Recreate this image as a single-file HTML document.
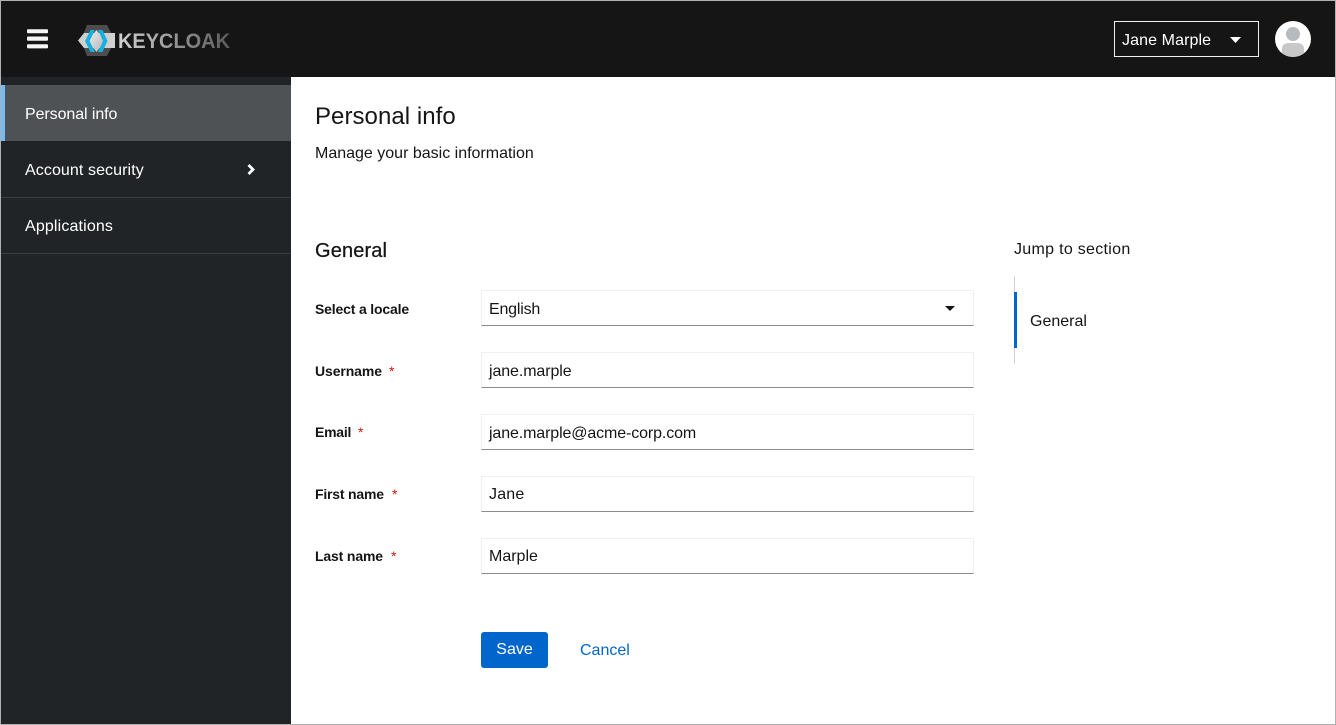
<!DOCTYPE html>
<html lang="en">
<head>
<meta charset="utf-8">
<title>Personal info</title>
<style>
html,body{margin:0;padding:0;background:#fff}
body{width:1336px;height:725px;position:relative;overflow:hidden;font-family:"Liberation Sans",sans-serif;font-size:16px;color:#151515}
.a{position:absolute;white-space:nowrap}
.t{line-height:24px}
.frame{position:absolute;left:0;top:0;width:1334px;height:723px;border:1px solid #b0b0b0;z-index:10;pointer-events:none}
.hdr{position:absolute;left:0;top:0;width:1336px;height:77px;background:#151515}
.side{position:absolute;left:0;top:77px;width:291px;height:648px;background:#212427}
.line{position:absolute;left:1px;width:290px;height:1px;background:#3c3f42}
.lab{position:absolute;left:315px;font-size:14px;line-height:20px;font-weight:700;white-space:nowrap}
.req{position:absolute;font-size:14px;line-height:20px;color:#c9190b}
.inp{position:absolute;left:481px;width:491px;height:34px;border:1px solid #f0f0f0;border-bottom:1px solid #8a8d90;background:#fff}
.val{position:absolute;left:489px;line-height:24px;white-space:nowrap}
</style>
</head>
<body>
<div class="hdr"></div>
<div class="side"></div>

<!-- hamburger -->
<svg class="a" style="left:27px;top:28px" width="21" height="22" viewBox="0 0 21 22">
<rect x="0" y="1.300" width="21" height="4" rx="1" fill="#f5f5f5"/>
<rect x="0" y="8.500" width="21" height="4.200" rx="1" fill="#f5f5f5"/>
<rect x="0" y="16.200" width="21" height="4.200" rx="1" fill="#f5f5f5"/>
</svg>

<!-- logo -->
<svg class="a" style="left:76px;top:22px" width="160" height="36" viewBox="0 0 160 36">
<defs>
<linearGradient id="g" x1="0" y1="0" x2="1" y2="0"><stop offset="0" stop-color="#d2d2d2"/><stop offset="1" stop-color="#5a5a5a"/></linearGradient>
<linearGradient id="d" x1="0" y1="0" x2="1" y2="1"><stop offset="0" stop-color="#eeeeee"/><stop offset="1" stop-color="#b4b4b4"/></linearGradient>
</defs>
<path d="M11 3H31L39 18.500L31 34H11L5 18.500Z" fill="#4d4d4d"/>
<path d="M8 11H39V26H8L2 18.500Z" fill="#d0d0d0"/>
<path d="M20.500 8L29 19L20.500 30L12 19Z" fill="url(#d)"/>
<path d="M14.500 8H19L13.500 19L19 30H14.500L9 19Z" fill="#17b0e2"/>
<path d="M22 8H26.500L31.500 19L26.500 30H22L27 19Z" fill="#17b0e2"/>
<text x="42" y="26" font-family="Liberation Sans" font-weight="700" font-size="21" textLength="112" lengthAdjust="spacingAndGlyphs" fill="url(#g)">KEYCLOAK</text>
</svg>

<!-- user dropdown -->
<div class="a" style="left:1114px;top:21px;width:143px;height:34px;border:1px solid #f0f0f0"></div>
<div class="a t" style="left:1122px;top:29px;color:#fff;font-size:16px;letter-spacing:.1px">Jane Marple</div>
<svg class="a" style="left:1230px;top:37px" width="11" height="6"><path d="M0 0H11L5.500 6Z" fill="#fff"/></svg>

<!-- avatar -->
<svg class="a" style="left:1275px;top:21px" width="36" height="36" viewBox="0 0 36 36">
<defs><clipPath id="c"><circle cx="18" cy="18" r="18"/></clipPath></defs>
<circle cx="18" cy="18" r="18" fill="#fff"/>
<g clip-path="url(#c)">
<circle cx="18" cy="13" r="7" fill="#b8bbbe"/>
<path d="M7 36V28Q7 22 14 22H22Q29 22 29 28V36Z" fill="#c8c8c8"/>
</g>
</svg>

<!-- nav -->
<div class="a" style="left:1px;top:85px;width:290px;height:56px;background:#4f5255"></div>
<div class="a" style="left:1px;top:85px;width:4px;height:56px;background:#73bcf7"></div>
<div class="a t" style="left:25px;top:103px;color:#fff;letter-spacing:-.08px">Personal info</div>
<div class="a t" style="left:25px;top:159px;color:#fff;letter-spacing:.09px">Account security</div>
<svg class="a" style="left:247px;top:164px" width="8" height="11" viewBox="0 0 8 11"><path d="M1.500 1L6 5.500L1.500 10" fill="none" stroke="#fff" stroke-width="2.800"/></svg>
<div class="line" style="top:197px"></div>
<div class="a t" style="left:25px;top:215px;color:#fff;letter-spacing:.15px">Applications</div>
<div class="line" style="top:253px"></div>

<!-- page heading -->
<div class="a" style="left:315px;top:102px;font-size:24px;line-height:30px;letter-spacing:.05px">Personal info</div>
<div class="a t" style="left:315px;top:142px">Manage your basic information</div>
<div class="a" style="left:315px;top:237px;font-size:20px;line-height:28px;letter-spacing:.14px;-webkit-text-stroke:.25px #151515">General</div>

<!-- form -->
<div class="lab" style="top:299px;letter-spacing:-.17px">Select a locale</div>
<div class="inp" style="top:290px"></div>
<div class="val" style="top:298px;letter-spacing:-.2px">English</div>
<svg class="a" style="left:945px;top:306px" width="10" height="5"><path d="M0 0H10L5 5Z" fill="#151515"/></svg>

<div class="lab" style="top:361px;letter-spacing:-.1px">Username</div><div class="req" style="left:389px;top:361px">*</div>
<div class="inp" style="top:352px"></div>
<div class="val" style="top:360px;letter-spacing:-.1px">jane.marple</div>

<div class="lab" style="top:422px;letter-spacing:-.25px">Email</div><div class="req" style="left:358px;top:422px">*</div>
<div class="inp" style="top:414px"></div>
<div class="val" style="top:422px;letter-spacing:-.12px">jane.marple@acme-corp.com</div>

<div class="lab" style="top:484px;letter-spacing:-.2px">First name</div><div class="req" style="left:392px;top:484px">*</div>
<div class="inp" style="top:476px"></div>
<div class="val" style="top:483px;letter-spacing:.2px">Jane</div>

<div class="lab" style="top:546px;letter-spacing:-.15px">Last name</div><div class="req" style="left:391px;top:546px">*</div>
<div class="inp" style="top:538px"></div>
<div class="val" style="top:545px">Marple</div>

<!-- buttons -->
<div class="a" style="left:481px;top:632px;width:67px;height:36px;background:#06c;border-radius:3px"></div>
<div class="a t" style="left:481px;top:638px;width:67px;color:#fff;text-align:center">Save</div>
<div class="a t" style="left:580px;top:639px;color:#06c">Cancel</div>

<!-- jump links -->
<div class="a t" style="left:1014px;top:238px;letter-spacing:.3px">Jump to section</div>
<div class="a" style="left:1014px;top:276px;width:1px;height:88px;background:#d2d2d2"></div>
<div class="a" style="left:1014px;top:292px;width:3px;height:56px;background:#06c"></div>
<div class="a t" style="left:1030px;top:310px">General</div>

<div class="frame"></div>
</body>
</html>
